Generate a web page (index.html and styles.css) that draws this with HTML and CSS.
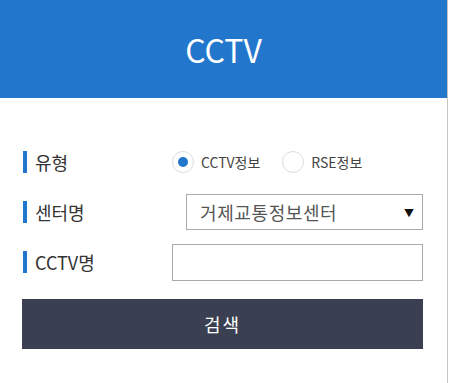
FILE: index.html
```html
<!DOCTYPE html>
<html lang="ko">
<head>
    <meta charset="UTF-8">
    <meta name="viewport" content="width=device-width, initial-scale=1.0">
    <title>CCTV</title>
    <link rel="stylesheet" href="styles.css">
</head>
<body>
    <div class="panel">
        <div class="panel-header">CCTV</div>

        <form class="search-form">
            <div class="form-row">
                <label class="form-label">유형</label>
                <div class="radio-group">
                    <label class="radio-item">
                        <input type="radio" name="type" checked>
                        <span>CCTV정보</span>
                    </label>
                    <label class="radio-item">
                        <input type="radio" name="type">
                        <span>RSE정보</span>
                    </label>
                </div>
            </div>

            <div class="form-row">
                <label class="form-label">센터명</label>
                <div class="select-box">
                    <select>
                        <option>거제교통정보센터</option>
                    </select>
                </div>
            </div>

            <div class="form-row">
                <label class="form-label">CCTV명</label>
                <input class="text-input" type="text">
            </div>

            <button type="button" class="search-btn">검색</button>
        </form>
    </div>
</body>
</html>
```

FILE: styles.css
```css
body {
    margin: 0;
    background: #ffffff;
    font-family: "Noto Sans CJK KR", "Noto Sans", sans-serif;
}

.panel {
    width: 447px;
    height: 383px;
    background: #ffffff;
    border-right: 1px solid #c4c4c4;
}

.panel-header {
    height: 98px;
    background-color: #2276cc;
    color: #ffffff;
    font-size: 32px;
    display: flex;
    align-items: center;
    justify-content: center;
}

.search-form {
    padding: 39px 24px 0 22px;
}

.form-row {
    display: grid;
    grid-template-columns: 150px 1fr;
    align-items: center;
    height: 50px;
}

/* label dengan garis biru di kiri */
.form-label {
    display: flex;
    align-items: center;
    font-size: 18px;
    color: #333333;
    height: 22px;
    border-left: 4px solid #2276cc;
    padding-left: 8px;
    margin-left: 1px;
}

.radio-group {
    display: flex;
    align-items: center;
    gap: 22px;
}

.radio-item {
    display: flex;
    align-items: center;
    gap: 7px;
    font-size: 14px;
    color: #444444;
}

.radio-item input {
    appearance: none;
    -webkit-appearance: none;
    width: 22px;
    height: 22px;
    margin: 0;
    border: 1px solid #dddddd;
    border-radius: 50%;
    background: #ffffff;
    display: flex;
    align-items: center;
    justify-content: center;
}

.radio-item input:checked::after {
    content: "";
    width: 10px;
    height: 10px;
    border-radius: 50%;
    background: #2276cc;
}

.select-box {
    position: relative;
    margin-left: 14px;
}

.select-box select {
    appearance: none;
    -webkit-appearance: none;
    width: 100%;
    height: 36px;
    border: 1px solid #aaaaaa;
    border-radius: 0;
    background: #ffffff;
    padding: 0 0 0 13px;
    font-family: inherit;
    font-size: 18px;
    letter-spacing: 0.6px;
    color: #555555;
}

.select-box::after {
    content: "▼";
    position: absolute;
    right: 9px;
    top: 11px;
    font-size: 10px;
    color: #111111;
    pointer-events: none;
}

.text-input {
    box-sizing: border-box;
    height: 37px;
    width: 100%;
    border: 1px solid #aaaaaa;
    background: #ffffff;
    margin: 0;
}

.search-btn {
    display: block;
    width: 100%;
    height: 50px;
    margin-top: 12px;
    border: none;
    background-color: #3a4052;
    color: #ffffff;
    font-family: inherit;
    font-size: 18px;
    letter-spacing: 2px;
}
```
